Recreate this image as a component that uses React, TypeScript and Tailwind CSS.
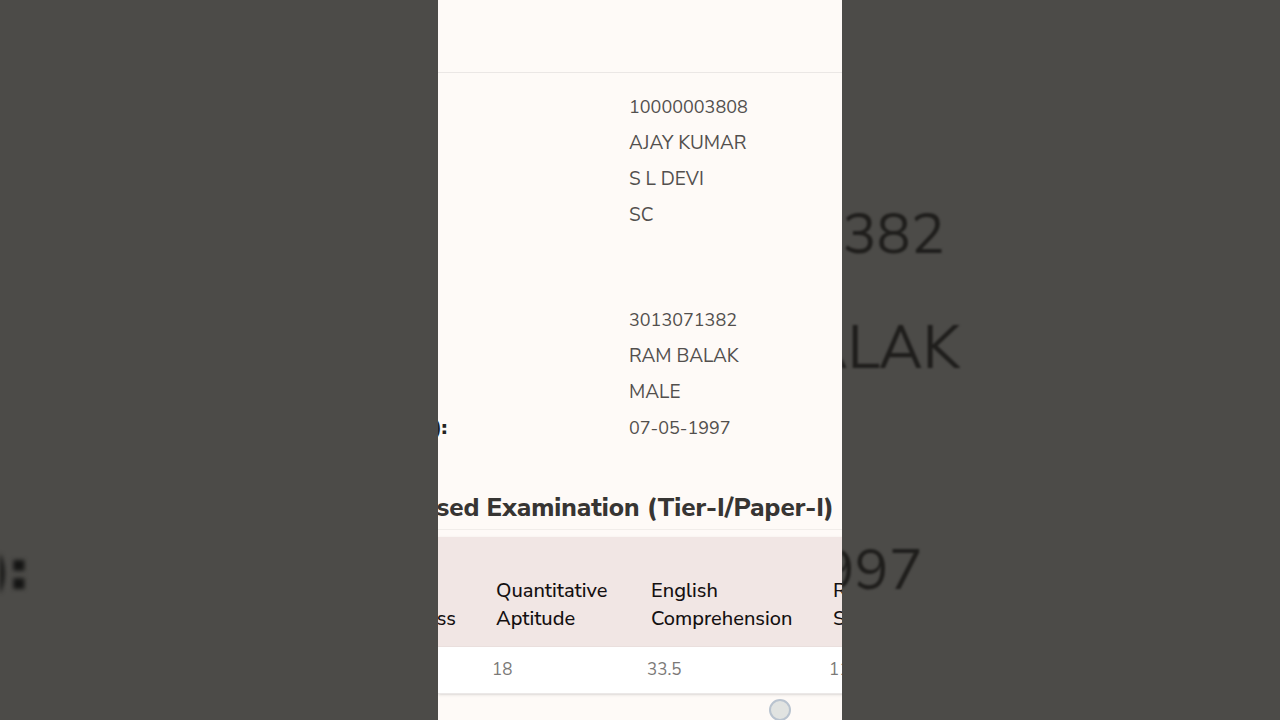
import type { ReactNode } from "react";

const candidate = ["10000003808", "AJAY KUMAR", "S L DEVI", "SC"];
const personal = ["3013071382", "RAM BALAK", "MALE", "07-05-1997"];

function Details({ values }: { values: string[] }) {
  return (
    <ul className="ml-auto w-[213px]">
      {values.map((value) => (
        <li
          key={value}
          className={`h-9 leading-9 text-[#524f4d] ${/^\d/.test(value) ? "text-[18px]" : "text-[19px]"}`}
        >
          {value}
        </li>
      ))}
    </ul>
  );
}

function ClippedEnd({ children, className }: { children: ReactNode; className: string }) {
  return (
    <div className={`flex justify-end overflow-hidden whitespace-nowrap ${className}`}>
      <span>{children}</span>
    </div>
  );
}

export default function App() {
  return (
    <div className="flex h-screen overflow-hidden bg-[#4c4b48] font-['Nunito_Sans','Nunito','Lato',sans-serif]">
      <aside aria-hidden="true" className="min-w-0 flex-1 overflow-hidden pt-[512px]">
        <ClippedEnd className="w-[27px] text-[60px] leading-[114px] font-black text-[#151514] blur-[2px]">
          ):
        </ClippedEnd>
      </aside>

      <main className="relative w-[404px] shrink-0 overflow-hidden bg-[#fefaf7]">
        <header className="h-[73px] border-b border-[#ebe7e5]" />

        <section className="pt-4">
          <Details values={candidate} />
          <div className="relative pt-[69px]">
            <Details values={personal} />
            <ClippedEnd className="absolute bottom-0 left-0 w-[9px] text-[19px] leading-9 font-black text-[#252322]">
              ):
            </ClippedEnd>
          </div>
        </section>

        <section className="pt-[44px]">
          <h1 className="mb-[7px] flex justify-end overflow-hidden border-b border-[#f1edea] pr-2 pb-[3px] text-[26px] leading-9 font-extrabold whitespace-nowrap text-[#373533]">
            <span>sed Examination (Tier-I/Paper-I)</span>
          </h1>
          <table className="w-[520px] table-fixed border-collapse border-b border-[#ebe8e7] bg-white text-left shadow-sm">
            <colgroup>
              <col className="w-[54px]" />
              <col className="w-[155px]" />
              <col className="w-[182px]" />
              <col />
            </colgroup>
            <thead>
              <tr className="h-[109px] border-b border-[#eadfdd] bg-[#f1e6e4] align-bottom text-[20px] leading-7 text-[#141011]">
                <th className="pb-[13px] font-medium">
                  <ClippedEnd className="w-[18px]">ss</ClippedEnd>
                </th>
                <th className="pb-[13px] pl-1 font-medium">
                  Quantitative
                  <br />
                  Aptitude
                </th>
                <th className="pb-[13px] pl-1 font-medium">
                  English
                  <br />
                  Comprehension
                </th>
                <th className="pb-[13px] pl-1 font-medium">
                  R
                  <br />S
                </th>
              </tr>
            </thead>
            <tbody>
              <tr className="h-[47px] text-[17px] text-[#7b7977]">
                <td />
                <td>18</td>
                <td>33.5</td>
                <td>11</td>
              </tr>
            </tbody>
          </table>
        </section>

        <div className="absolute top-[699px] right-[51px] size-[22px] rounded-full border-2 border-[#b9c3cf] bg-[#e1e3e1]" />
      </main>

      <aside
        aria-hidden="true"
        className="min-w-0 flex-1 overflow-hidden pt-[177px] leading-[114px] text-[#1f1e1c]"
      >
        <ClippedEnd className="w-[103px] text-[57px] blur-[1px]">382</ClippedEnd>
        <ClippedEnd className="w-[118px] text-[60px] blur-[1px]">ALAK</ClippedEnd>
        <ClippedEnd className="mt-[108px] w-[81px] text-[57px] blur-[1px]">997</ClippedEnd>
      </aside>
    </div>
  );
}
